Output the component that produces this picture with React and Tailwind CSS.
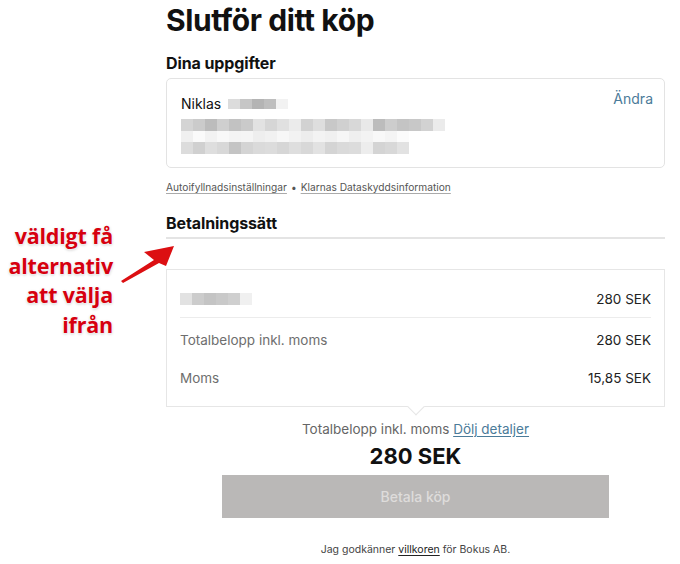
import React from "react";

const row1 = ["#dcdcdc", "#c6c6c6", "#b4b4b4", "#bebebe", "#f2f2f2"];
const row2 = ["#d4d4d4","#cbcbcb","#bcbcbc","#cfcfcf","#c2c2c2","#cacaca","#e2e2e2","#d6d6d6","#e0e0e0","#ebebeb","#d2d2d2","#dedede","#c8c8c8","#d0d0d0","#d8d8d8","#e9e9e9","#bcbcbc","#cdcdcd","#c4c4c4","#c8c8c8","#d2d2d2","#ebebeb"];
const row3 = ["#f0f0f0","#fafafa","#f2f2f2","#f8f8f8","#f4f4f4","#f5f5f5","#eeeeee","#f1f1f1","#f7f7f7","#f2f2f2","#ededed","#f3f3f3","#f0f0f0","#f6f6f6","#efefef","#f3f3f3","#f8f8f8","#f4f4f4","#fbfbfb"];
const row4 = ["#dcdcdc","#d0d0d0","#dedede","#d8d8d8","#c4c4c4","#d4d4d4","#dadada","#dcdcdc","#d6d6d6","#dedede","#d8d8d8","#e2e2e2","#d4d4d4","#dadada","#dcdcdc","#ededed","#d4d4d4","#d8d8d8","#e2e2e2"];
const rowItem = ["#e2e2e2","#cccccc","#c4c4c4","#c9c9c9","#cfcfcf","#f0f0f0"];

function Mosaic({ cells, h = "h-[12px]" }) {
  return (
    <div className={`flex ${h}`}>
      {cells.map((c, i) => (
        <div key={i} className="w-[12px] h-full" style={{ backgroundColor: c }} />
      ))}
    </div>
  );
}

export default function App() {
  return (
    <div className="relative w-[680px] h-[564px] bg-white overflow-hidden font-['Inter',sans-serif] text-[#1a1a1a]">
      {/* annotation */}
      <div className="absolute left-0 top-[221px] w-[113px] text-right font-['Open_Sans',sans-serif] font-bold text-[21.5px] leading-[29.5px] tracking-[-0.2px] text-[#d6000f] [text-shadow:0_0_2px_#fff,0_0_2px_#fff,0_1px_3px_rgba(0,0,0,0.25)]">
        <div>väldigt få</div>
        <div>alternativ</div>
        <div>att välja</div>
        <div>ifrån</div>
      </div>
      <svg className="absolute left-[118px] top-[242px]" width="60" height="42" viewBox="0 0 60 42">
        <path d="M3 39 L36 18 L26 10 L56 4 L48 24 L41 21 L5 41 Z" fill="#dc0f12" />
      </svg>

      <div className="ml-[166px] w-[499px] flex flex-col">
        <h1 className="mt-[3px] text-[30px] leading-[35px] font-bold tracking-[-0.4px] text-[#111]">Slutför ditt köp</h1>
        <h2 className="mt-[15px] text-[16px] leading-[20px] font-bold tracking-[-0.1px] text-[#111]">Dina uppgifter</h2>

        <div className="mt-[5px] h-[90px] rounded-[5px] border border-[#e3e3e3] pl-[14px] pr-[11px] pt-[15px] flex">
          <div className="flex-1 flex flex-col">
            <div className="flex items-center h-[20px]">
              <span className="text-[14px] leading-[20px] text-[#111]">Niklas</span>
              <div className="ml-[7px]"><Mosaic cells={row1} h="h-[10px]" /></div>
            </div>
            <div className="mt-[5px]"><Mosaic cells={row2} /></div>
            <Mosaic cells={row3} h="h-[11px]" />
            <Mosaic cells={row4} />
          </div>
          <span className="text-[14px] leading-[14px] -mt-[2px] text-[#4b7b99]">Ändra</span>
        </div>

        <div className="mt-[12px] text-[10.2px] leading-[14px] text-[#555] flex items-center gap-[4px]">
          <span className="underline underline-offset-2 decoration-[#aaa]">Autoifyllnadsinställningar</span>
          <span>•</span>
          <span className="underline underline-offset-2 decoration-[#aaa]">Klarnas Dataskyddsinformation</span>
        </div>

        <h2 className="mt-[19px] text-[16px] leading-[20px] font-bold tracking-[-0.1px] text-[#111]">Betalningssätt</h2>
        <div className="mt-[4px] h-[2px] bg-[#e4e4e4]" />

        <div className="relative mt-[30px] border border-[#e6e6e6] px-[13px] pb-[12px]">
          <div className="flex items-center justify-between h-[48px] pt-[11px] border-b border-[#ececec]">
            <Mosaic cells={rowItem} />
            <span className="text-[13.5px] text-[#222]">280 SEK</span>
          </div>
          <div className="flex items-center justify-between h-[44px]">
            <span className="text-[13.5px] text-[#6e6e6e]">Totalbelopp inkl. moms</span>
            <span className="text-[13.5px] text-[#222]">280 SEK</span>
          </div>
          <div className="flex items-center justify-between h-[32px]">
            <span className="text-[13.5px] text-[#6e6e6e]">Moms</span>
            <span className="text-[13.5px] text-[#222]">15,85 SEK</span>
          </div>
          <div className="absolute left-1/2 -bottom-[7px] -translate-x-1/2 w-[12px] h-[12px] rotate-45 bg-white border-r border-b border-[#e6e6e6]" />
        </div>

        <div className="mt-[12px] text-center text-[13.5px] leading-[20px] text-[#666]">
          Totalbelopp inkl. moms <span className="text-[#4b7b99] underline underline-offset-2">Dölj detaljer</span>
        </div>
        <div className="mt-[3px] text-center text-[22px] leading-[28px] font-bold text-[#111]">280 SEK</div>
        <div className="mx-auto mt-[5px] w-[387px] h-[43px] bg-[#bab8b7] flex items-center justify-center text-[14px] font-medium text-[#dedcdb]">
          Betala köp
        </div>
        <div className="mt-[25px] text-center text-[10.5px] leading-[14px] text-[#444]">
          Jag godkänner <span className="underline underline-offset-2 text-[#222]">villkoren</span> för Bokus AB.
        </div>
      </div>
    </div>
  );
}
